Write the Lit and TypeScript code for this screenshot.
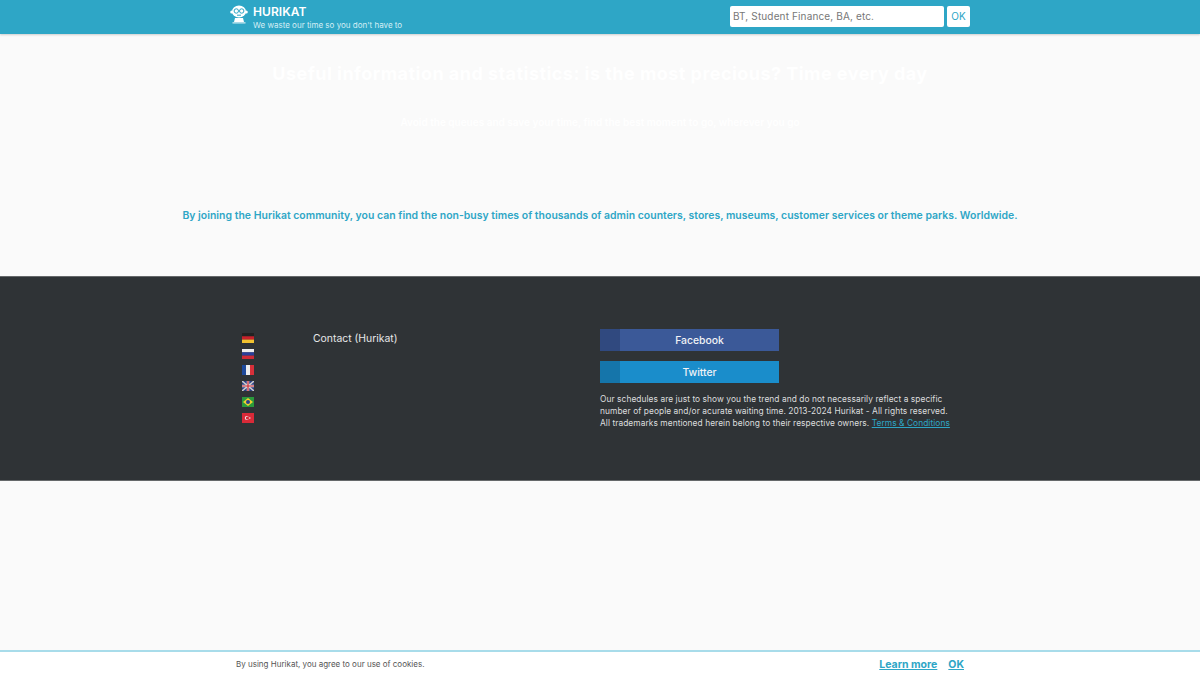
import { LitElement, html, css } from "lit";
import { customElement } from "lit/decorators.js";

@customElement("app-root")
export class AppRoot extends LitElement {
  static styles = css`
    :host { display: flex; flex-direction: column; height: 677px; overflow: hidden; background: #fafafa; font-family: Inter, "Liberation Sans", sans-serif; color: #fff; }
    .header { flex: none; height: 34px; background: #2ea6c6; box-shadow: 0 1px 2px rgba(0,0,0,.18); box-sizing: border-box; display: flex; justify-content: center; position: relative; }
    .header-in { width: 740px; display: flex; justify-content: space-between; align-items: flex-start; }
    .brand { display: flex; gap: 5px; padding-top: 5px; }
    .brand svg { width: 18px; height: 19px; }
    .brand-name { font-size: 12px; line-height: 14px; font-weight: 600; letter-spacing: .08px; }
    .brand-sub { font-size: 8px; line-height: 10px; margin-top: 1px; color: #d5eef5; letter-spacing: 0; }
    .search { display: flex; gap: 3px; padding: 6px 0 0; }
    .search-in { width: 214px; height: 21px; box-sizing: border-box; background: #fff; border-radius: 2px; color: #777; font-size: 10px; line-height: 21px; padding-left: 3px; letter-spacing: .14px; }
    .search-ok { width: 23px; height: 21px; background: #fff; border-radius: 2px; color: #2ea6c6; font-size: 10px; line-height: 21px; text-align: center; }
    .hero { flex: none; height: 242px; box-sizing: border-box; text-align: center; color: #fff; }
    .hero h1 { margin: 0; padding-top: 29px; font-size: 18px; line-height: 22px; font-weight: 700; letter-spacing: .46px; }
    .hero h2 { margin: 0; padding-top: 31px; font-size: 10px; line-height: 12px; font-weight: 600; }
    .hero p { margin: 0; padding-top: 81px; font-size: 10.45px; line-height: 14px; font-weight: 600; color: #2ea6c6; letter-spacing: .02px; }
    .footer { flex: none; height: 205px; box-sizing: border-box; background: #2f3336; border-top: 1px solid #65686a; border-bottom: 1px solid #65686a; display: flex; justify-content: center; }
    .footer-in { width: 740px; display: flex; padding-top: 56px; }
    .flags { width: 83px; padding-left: 12px; box-sizing: border-box; display: flex; flex-direction: column; gap: 6px; }
    .flags svg { display: block; width: 12px; height: 10px; }
    .contact { width: 287px; font-size: 10.4px; line-height: 12px; color: #e6e7e8; }
    .social { width: 350px; display: flex; flex-direction: column; }
    .btn { width: 179px; height: 22px; display: flex; color: #f0f2f6; font-size: 10.4px; line-height: 24px; font-weight: 500; }
    .btn i { display: block; width: 20px; flex: none; }
    .btn span { flex: 1; text-align: center; }
    .fb { background: #3b5998; margin-top: -4px; }
    .fb i { background: #30497f; }
    .tw { background: #1a8dcb; margin-top: 10px; }
    .tw i { background: #1575aa; }
    .legal { margin: 10px 0 0; font-size: 8.4px; line-height: 12px; color: #dcddde; white-space: nowrap; letter-spacing: .055px; }
    .legal a { color: #2ea6c6; text-decoration: underline; }
    .spacer { flex: 1; }
    .cookie { flex: none; height: 27px; box-sizing: border-box; background: #fff; border-top: 2px solid #a8dcea; display: flex; justify-content: center; }
    .cookie-in { width: 740px; display: flex; justify-content: space-between; align-items: center; padding-left: 6px; box-sizing: border-box; }
    .cookie-text { font-size: 8px; color: #555; letter-spacing: 0; padding-bottom: 2px; }
    .cookie-links { display: flex; gap: 11px; padding-right: 6px; font-size: 10.5px; font-weight: 700; color: #2ea6c6; text-decoration: underline; }
  `;

  render() {
    return html`
      <div class="header"><div class="header-in">
        <div class="brand">
          <svg viewBox="0 0 18 19" aria-hidden="true">
            <circle cx="1.8" cy="7" r="1.6" fill="#fff"/><circle cx="16.2" cy="7" r="1.6" fill="#fff"/>
            <ellipse cx="9" cy="6.5" rx="7" ry="6" fill="#fff"/>
            <circle cx="6.3" cy="6" r="2.2" fill="none" stroke="#2ea6c6" stroke-width="1"/>
            <circle cx="11.7" cy="6" r="2.2" fill="none" stroke="#2ea6c6" stroke-width="1"/>
            <path d="M7 10.2h4" stroke="#2ea6c6" stroke-width="1"/>
            <path d="M5 13h8l1 4H4z" fill="#fff"/><path d="M2.5 17.4h13v1h-13z" fill="#fff"/>
          </svg>
          <div><div class="brand-name">HURIKAT</div><div class="brand-sub">We waste our time so you don't have to</div></div>
        </div>
        <div class="search"><div class="search-in">BT, Student Finance, BA, etc.</div><div class="search-ok">OK</div></div>
      </div></div>
      <div class="hero">
        <h1>Useful information and statistics: is the most precious? Time every day</h1>
        <h2>Avoid the queues and save your time, find the best moment to go, wherever you go</h2>
        <p>By joining the Hurikat community, you can find the non-busy times of thousands of admin counters, stores, museums, customer services or theme parks. Worldwide.</p>
      </div>
      <div class="footer"><div class="footer-in">
        <div class="flags">
          <svg viewBox="0 0 12 10"><rect width="12" height="3.4" fill="#222"/><rect y="3.3" width="12" height="3.4" fill="#c8202a"/><rect y="6.6" width="12" height="3.4" fill="#f2c230"/></svg>
          <svg viewBox="0 0 12 10"><rect width="12" height="3.4" fill="#eee"/><rect y="3.3" width="12" height="3.4" fill="#2a3f9a"/><rect y="6.6" width="12" height="3.4" fill="#cf2b36"/></svg>
          <svg viewBox="0 0 12 10"><rect width="4" height="10" fill="#1f4a9c"/><rect x="4" width="4" height="10" fill="#eee"/><rect x="8" width="4" height="10" fill="#d8303a"/></svg>
          <svg viewBox="0 0 12 10"><rect width="12" height="10" fill="#2b3f85"/><path d="M0 0l12 10M12 0L0 10" stroke="#ccc" stroke-width="1.5"/><path d="M6 0v10M0 5h12" stroke="#ddd" stroke-width="2.5"/><path d="M6 0v10M0 5h12" stroke="#cf2b36" stroke-width="1.2"/></svg>
          <svg viewBox="0 0 12 10"><rect width="12" height="10" fill="#2a9a3c"/><path d="M6 1l5 4-5 4-5-4z" fill="#f0d030"/><circle cx="6" cy="5" r="2" fill="#27408b"/></svg>
          <svg viewBox="0 0 12 10"><rect width="12" height="10" fill="#d92a38"/><circle cx="4.8" cy="5" r="2" fill="#eee"/><circle cx="5.4" cy="5" r="1.6" fill="#d92a38"/><circle cx="7.8" cy="5" r=".8" fill="#eee"/></svg>
        </div>
        <div class="contact">Contact (Hurikat)</div>
        <div class="social">
          <div class="btn fb"><i></i><span>Facebook</span></div>
          <div class="btn tw"><i></i><span>Twitter</span></div>
          <p class="legal">Our schedules are just to show you the trend and do not necessarily reflect a specific<br>number of people and/or acurate waiting time. 2013-2024 Hurikat - All rights reserved.<br>All trademarks mentioned herein belong to their respective owners. <a>Terms &amp; Conditions</a></p>
        </div>
      </div></div>
      <div class="spacer"></div>
      <div class="cookie"><div class="cookie-in">
        <div class="cookie-text">By using Hurikat, you agree to our use of cookies.</div>
        <div class="cookie-links"><span>Learn more</span><span>OK</span></div>
      </div></div>
    `;
  }
}
